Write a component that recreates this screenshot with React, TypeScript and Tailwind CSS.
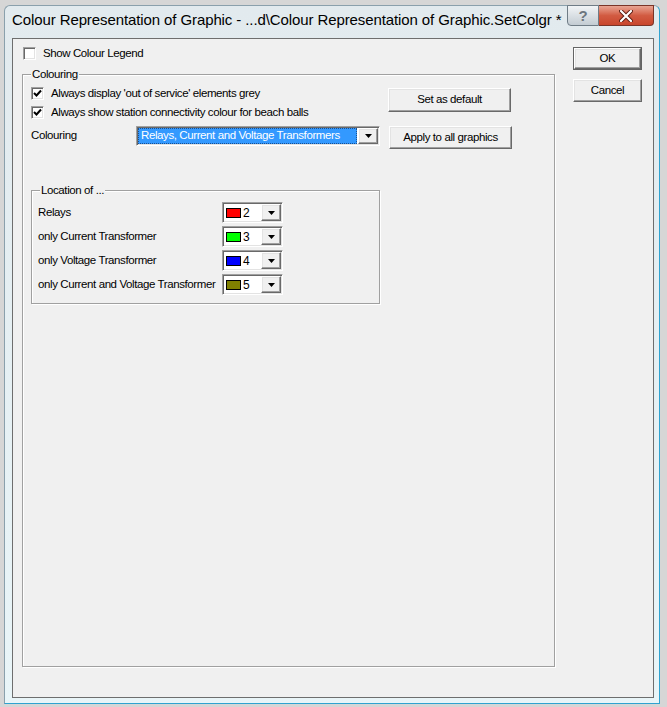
import React from "react";

const raised =
  "border border-t-white border-l-white border-r-[#696969] border-b-[#696969] shadow-[inset_-1px_-1px_0_#a0a0a0,inset_1px_1px_0_#e3e3e3] bg-[#f0f0f0]";
const sunken =
  "border border-t-[#a0a0a0] border-l-[#a0a0a0] border-r-white border-b-white shadow-[inset_1px_1px_0_#696969,inset_-1px_-1px_0_#e3e3e3] bg-white";

function Tri() {
  return (
    <svg width="7" height="4" viewBox="0 0 7 4">
      <polygon points="0,0 7,0 3.5,4" fill="#000" />
    </svg>
  );
}

function Check({ checked }: { checked?: boolean }) {
  return (
    <div className={`flex h-[13px] w-[13px] shrink-0 items-center justify-center ${sunken}`}>
      {checked && (
        <svg width="9" height="9" viewBox="0 0 9 9">
          <path d="M1 4 L3.5 6.5 L8 1.5" stroke="#000" strokeWidth="2" fill="none" />
        </svg>
      )}
    </div>
  );
}

function Group({
  label,
  className,
  children,
}: {
  label: string;
  className?: string;
  children?: React.ReactNode;
}) {
  return (
    <div
      className={`relative border border-[#a0a0a0] shadow-[1px_1px_0_#fff,inset_1px_1px_0_#fff] ${className ?? ""}`}
    >
      <span className="absolute left-[8px] -top-[8px] bg-[#f0f0f0] px-[1px] leading-[14px]">{label}</span>
      {children}
    </div>
  );
}

function ColorCombo({ swatch, n }: { swatch: string; n: string }) {
  return (
    <div className={`flex h-[21px] w-[61px] items-center ${sunken}`}>
      <div className={`ml-[3px] h-[10px] w-[15px] border border-black ${swatch}`} />
      <span className="ml-[2px] text-[12px] leading-none">{n}</span>
      <div className={`ml-auto mr-[1px] flex h-[17px] w-[20px] items-center justify-center ${raised}`}>
        <Tri />
      </div>
    </div>
  );
}

export default function App() {
  return (
    <div className="flex h-[707px] w-[667px] bg-[#d6d6d6] pb-[3px] pl-[4px] pr-[7px] pt-[5px] font-['Liberation_Sans',Arial,sans-serif] text-[11.5px] tracking-[-0.4px] text-black">
      <div className="flex h-[699px] w-[656px] flex-col rounded-t-[6px] border border-l-[#8aa0ac] border-t-[#8aa0ac] border-r-[#2fa3d0] border-b-[#2fa3d0] bg-gradient-to-b from-[#e2eaee] to-[#e9f5f8]">
        {/* Title bar */}
        <div className="flex h-[32px] items-start">
          <div className="ml-[7px] mt-[4px] whitespace-nowrap text-[15px] leading-[20px] tracking-[-0.1px] text-black">
            Colour Representation of Graphic - ...d\Colour Representation of Graphic.SetColgr *
          </div>
          <div className="ml-auto mr-[5px] flex -mt-px">
            <div className="flex h-[21px] w-[32px] items-center justify-center rounded-bl-[4px] border border-[#6f7c86] bg-gradient-to-b from-[#f2f4f6] to-[#c3ccd3] text-[15px] font-bold leading-none text-[#6d767e]">
              ?
            </div>
            <div className="flex h-[21px] w-[55px] items-center justify-center rounded-br-[4px] border border-l-0 border-[#7a3428] bg-gradient-to-b from-[#e8a493] via-[#d25b42] to-[#c8452c]">
              <svg width="14" height="12" viewBox="0 0 14 12">
                <path d="M2 1 L12 11 M12 1 L2 11" stroke="#5a1c12" strokeWidth="4" strokeLinecap="round" />
                <path d="M2 1 L12 11 M12 1 L2 11" stroke="#fff" strokeWidth="2.2" strokeLinecap="round" />
              </svg>
            </div>
          </div>
        </div>

        {/* Client area */}
        <div className="mb-[5px] ml-[7px] mr-[5px] flex flex-1 border border-[#6e6e6e] bg-[#f0f0f0]">
          {/* Left column */}
          <div className="flex w-[542px] flex-col pl-[9px]">
            <div className="ml-[1px] mt-[8px] flex h-[13px] items-center">
              <Check />
              <span className="ml-[7px]">Show Colour Legend</span>
            </div>

            <Group label="Colouring" className="mt-[14px] h-[593px] w-[533px]">
              <div className="flex flex-col pl-[8px] pt-[12px]">
                <div className="flex">
                  <div className="flex w-[357px] flex-col gap-[6px]">
                    <div className="flex h-[13px] items-center">
                      <Check checked />
                      <span className="ml-[7px]">Always display 'out of service' elements grey</span>
                    </div>
                    <div className="flex h-[13px] items-center">
                      <Check checked />
                      <span className="ml-[7px] w-[258px] overflow-hidden whitespace-nowrap">
                        Always show station connectivity colour for beach balls
                      </span>
                    </div>
                  </div>
                  <button className={`mt-[1px] h-[24px] w-[123px] ${raised}`}>Set as default</button>
                </div>

                <div className="mt-[7px] flex items-start">
                  <span className="mt-[2px] w-[105px] leading-[14px]">Colouring</span>
                  <div className={`flex h-[20px] w-[244px] items-center ${sunken}`}>
                    <div className="ml-[1px] flex h-[16px] w-[219px] items-center overflow-hidden whitespace-nowrap bg-[#3399ff] pl-[3px] text-white outline outline-1 -outline-offset-1 outline-dotted outline-[#1a4f8f]">
                      Relays, Current and Voltage Transformers
                    </div>
                    <div className={`ml-auto mr-[1px] flex h-[16px] w-[20px] items-center justify-center ${raised}`}>
                      <Tri />
                    </div>
                  </div>
                  <button className={`ml-[9px] h-[23px] w-[123px] ${raised}`}>Apply to all graphics</button>
                </div>

                <Group label="Location of ..." className="mt-[41px] h-[114px] w-[349px]">
                  <div className="flex flex-col gap-[3px] pl-[6px] pt-[11px]">
                    {[
                      ["Relays", "bg-[#ff0000]", "2"],
                      ["only Current Transformer", "bg-[#00ff00]", "3"],
                      ["only Voltage Transformer", "bg-[#0000ff]", "4"],
                      ["only Current and Voltage Transformer", "bg-[#808000]", "5"],
                    ].map(([t, c, n]) => (
                      <div key={n} className="flex h-[21px] items-center">
                        <span className="w-[184px]">{t}</span>
                        <ColorCombo swatch={c} n={n} />
                      </div>
                    ))}
                  </div>
                </Group>
              </div>
            </Group>
          </div>

          {/* Right column */}
          <div className="ml-[18px] flex flex-col pt-[8px]">
            <button className="h-[23px] w-[69px] border border-[#646464] bg-[#f0f0f0]">
              <div className={`flex h-full w-full items-center justify-center ${raised}`}>OK</div>
            </button>
            <button className={`mt-[9px] h-[23px] w-[69px] ${raised}`}>Cancel</button>
          </div>
        </div>
      </div>
    </div>
  );
}
